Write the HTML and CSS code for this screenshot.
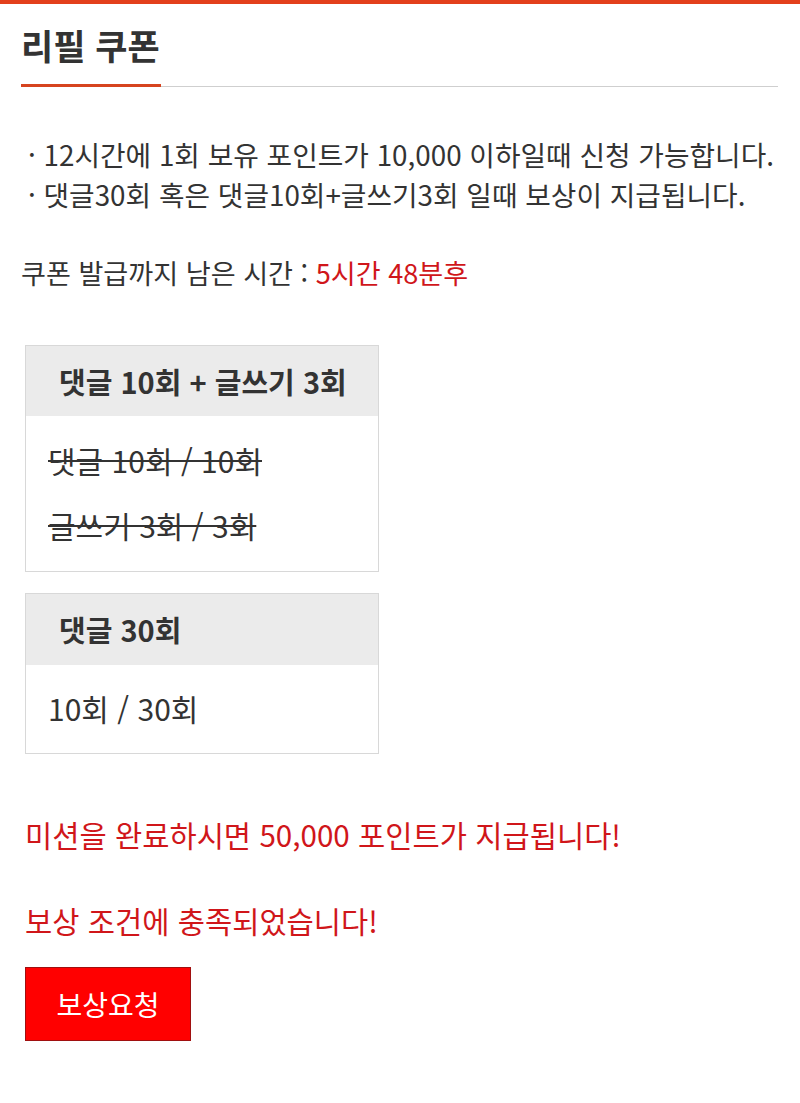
FILE: index.html
```html
<!DOCTYPE html>
<html lang="ko">
<head>
<meta charset="utf-8">
<title>리필 쿠폰</title>
<link rel="stylesheet" href="styles.css">
</head>
<body>
<div class="topbar"></div>
<div class="page">
  <div class="title-wrap">
    <h1 class="title">리필 쿠폰</h1>
  </div>
  <ul class="notes">
    <li>· 12시간에 1회 보유 포인트가 10,000 이하일때 신청 가능합니다.</li>
    <li>· 댓글30회 혹은 댓글10회+글쓰기3회 일때 보상이 지급됩니다.</li>
  </ul>
  <p class="remain">쿠폰 발급까지 남은 시간 : <span class="red">5시간 48분후</span></p>

  <div class="box">
    <div class="box-head">댓글 10회 + 글쓰기 3회</div>
    <div class="box-body">
      <div class="row done">댓글 10회 / 10회</div>
      <div class="row done">글쓰기 3회 / 3회</div>
    </div>
  </div>

  <div class="box box-second">
    <div class="box-head">댓글 30회</div>
    <div class="box-body">
      <div class="row">10회 / 30회</div>
    </div>
  </div>

  <p class="msg msg-first">미션을 완료하시면 50,000 포인트가 지급됩니다!</p>
  <p class="msg msg-second">보상 조건에 충족되었습니다!</p>
  <button class="btn">보상요청</button>
</div>
</body>
</html>
```
FILE: styles.css
```css
* { box-sizing: border-box; }
html, body { margin: 0; padding: 0; background: #fff; }
body {
  font-family: "Noto Sans CJK KR", "Noto Sans", sans-serif;
  color: #333;
}
.topbar { height: 4px; background: #e3401c; }
.page { padding: 0 22px 0 21px; }
.title-wrap { border-bottom: 1px solid #cfcfcf; }
.title {
  display: inline-block;
  margin: 0 0 -1px 0;
  padding: 21px 1px 19px 0;
  font-size: 35px;
  line-height: 40px;
  font-weight: 700;
  color: #333;
  border-bottom: 3px solid #d6441f;
}
.notes {
  list-style: none;
  margin: 47px 0 0 0;
  padding: 0 0 0 7px;
  font-size: 27.8px;
  line-height: 40px;
  white-space: nowrap;
}
.remain {
  margin: 39px 0 0 0;
  font-size: 27.1px;
  line-height: 40px;
}
.red { color: #d0161a; }
.box {
  width: 354px;
  margin: 52px 0 0 4px;
  border: 1px solid #d8d8d8;
}
.box-second { margin-top: 21px; }
.box-head {
  height: 70px;
  background: #ebebeb;
  padding: 0 0 0 33px;
  font-size: 29px;
  font-weight: 700;
  line-height: 70px;
  color: #333;
  white-space: nowrap;
}
.box-second .box-head { height: 71px; line-height: 71px; }
.box-body {
  padding: 24px 22px 26px;
  display: flex;
  flex-direction: column;
  gap: 25px;
}
.box-second .box-body { padding: 23px 22px 25px; }
.row { font-size: 30px; line-height: 40px; color: #333; }
.done {
  text-decoration: line-through;
  text-decoration-thickness: 2px;
}
.msg {
  margin: 0 0 0 4px;
  font-size: 29.6px;
  line-height: 40px;
  color: #d0161a;
  white-space: nowrap;
}
.msg-first { margin-top: 61px; }
.msg-second { margin-top: 46px; }
.btn {
  display: block;
  margin: 26px 0 0 4px;
  width: 166px;
  height: 74px;
  background: #ff0000;
  border: 1px solid #a01010;
  color: #fff;
  font-family: "Noto Sans CJK KR", "Noto Sans", sans-serif;
  font-size: 28px;
  padding: 0;
}
```
